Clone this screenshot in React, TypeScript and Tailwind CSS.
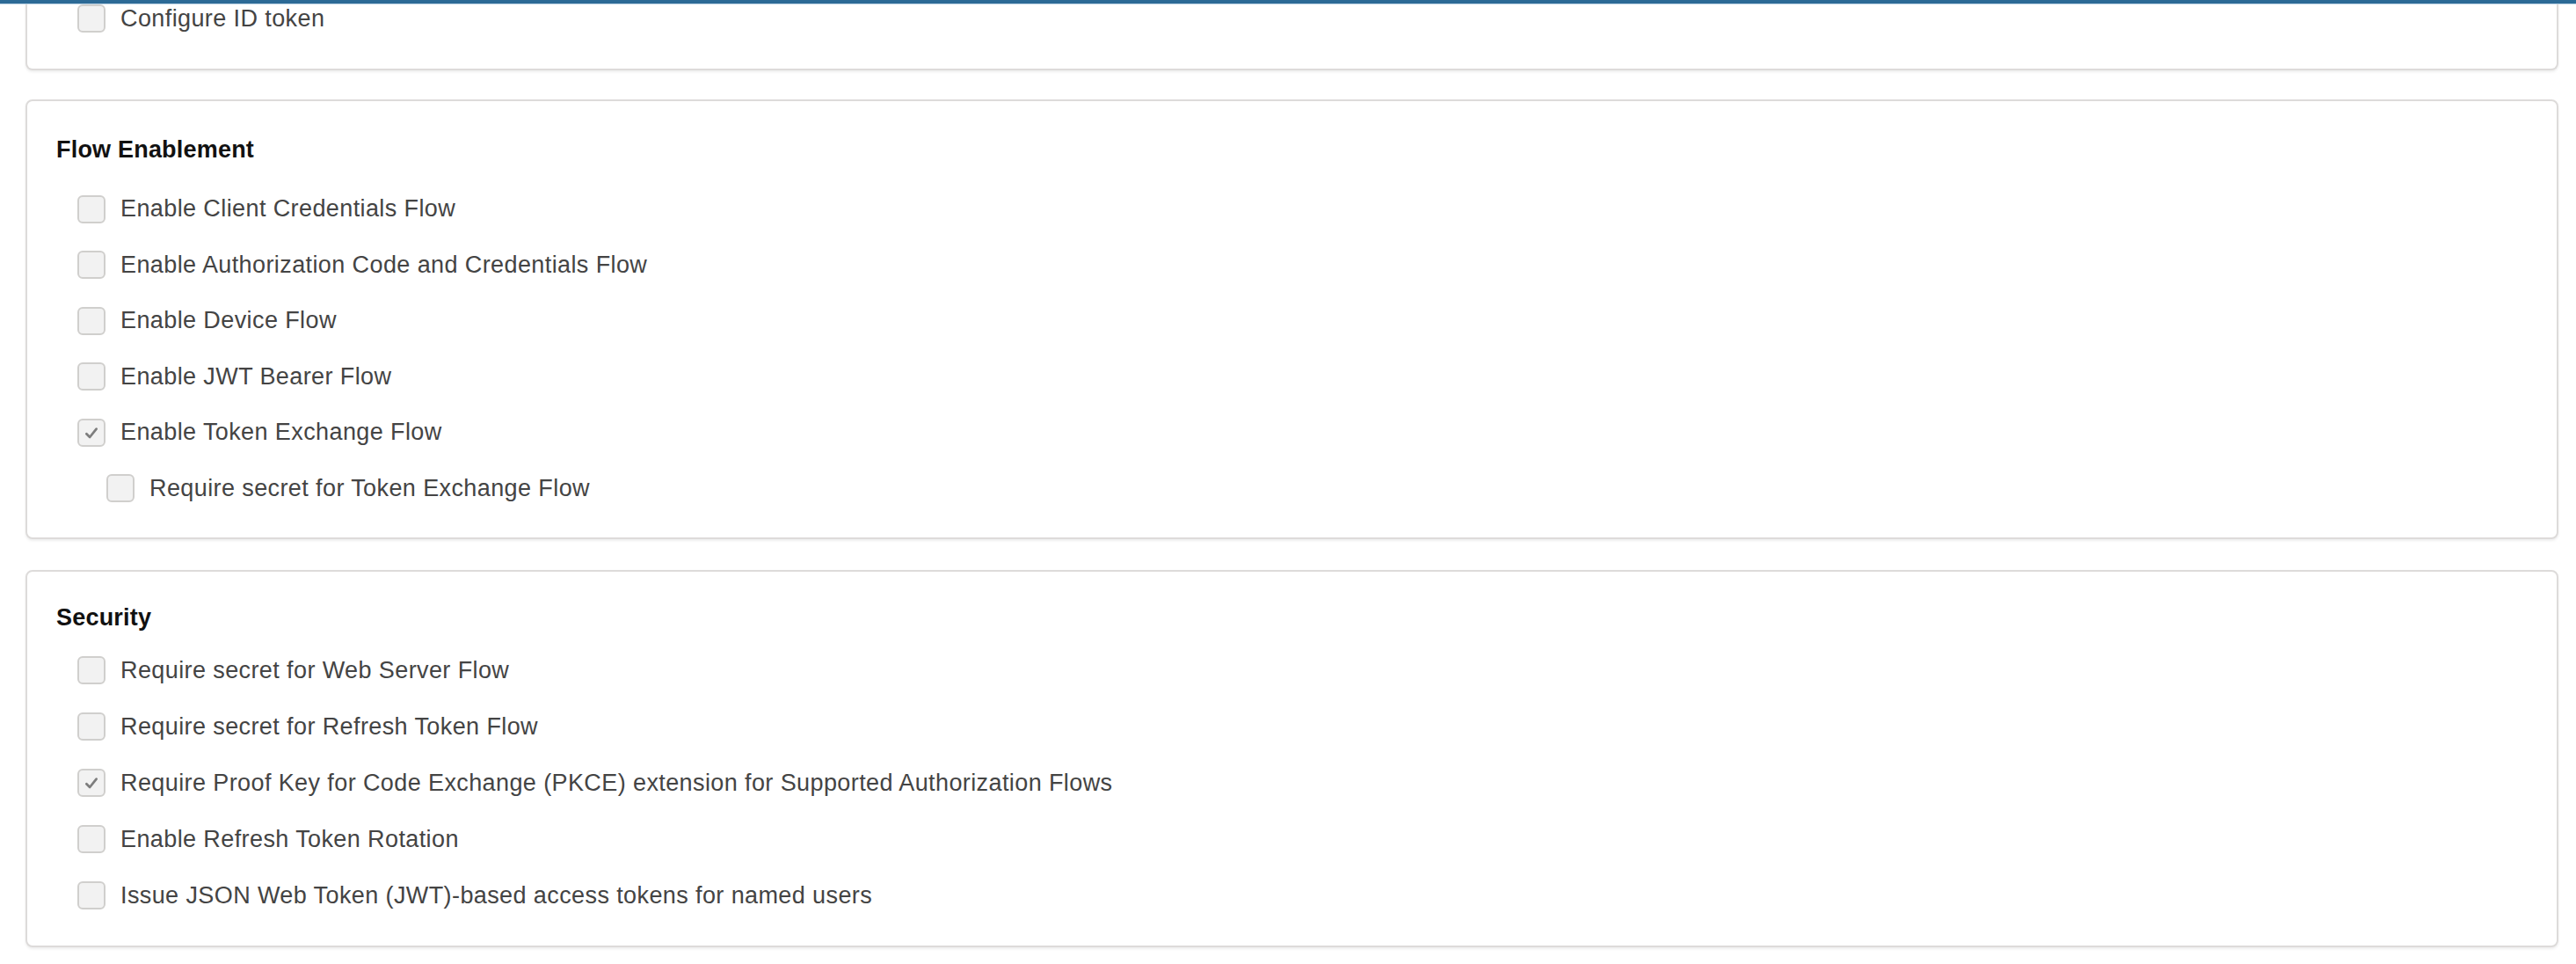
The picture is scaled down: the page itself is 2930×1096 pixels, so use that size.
import React from 'react';

type Item = { label: string; checked?: boolean; nested?: boolean };

const flowItems: Item[] = [
  { label: 'Enable Client Credentials Flow' },
  { label: 'Enable Authorization Code and Credentials Flow' },
  { label: 'Enable Device Flow' },
  { label: 'Enable JWT Bearer Flow' },
  { label: 'Enable Token Exchange Flow', checked: true },
  { label: 'Require secret for Token Exchange Flow', nested: true },
];

const securityItems: Item[] = [
  { label: 'Require secret for Web Server Flow' },
  { label: 'Require secret for Refresh Token Flow' },
  { label: 'Require Proof Key for Code Exchange (PKCE) extension for Supported Authorization Flows', checked: true },
  { label: 'Enable Refresh Token Rotation' },
  { label: 'Issue JSON Web Token (JWT)-based access tokens for named users' },
];

const CheckBox: React.FC<{ checked?: boolean }> = ({ checked }) => (
  <span className="flex items-center justify-center w-[32px] h-[32px] shrink-0 rounded-[6px] border-2 border-[#d0cfcd] bg-[#f2f2f2]">
    {checked && (
      <svg width="20" height="20" viewBox="0 0 16 16" fill="none" stroke="#7d7d7d" strokeWidth="2.2" strokeLinecap="round" strokeLinejoin="round">
        <polyline points="3.5,9 6.5,12 12.5,4.5" />
      </svg>
    )}
  </span>
);

const Row: React.FC<{ item: Item; pitch: string }> = ({ item, pitch }) => (
  <div className={`flex items-center gap-[17px] ${pitch} ${item.nested ? 'pl-[57px]' : 'pl-[24px]'}`}>
    <CheckBox checked={item.checked} />
    <span className="text-[27px] leading-none tracking-[0.4px] text-[#444444]">{item.label}</span>
  </div>
);

const card = 'bg-white border-2 border-[#dddbda] rounded-[8px] shadow-[0_2px_3px_rgba(0,0,0,0.07)]';

export default function App() {
  return (
    <div className="w-[2930px] h-[1096px] overflow-hidden bg-white font-['Liberation_Sans',Arial,sans-serif]">
      {/* Top bar */}
      <div className="relative z-10 h-[4px] bg-[#2c6a96] border-b border-[#b9d1e3] box-content" />

      <div className="pl-[29px] pr-[20px]">
        {/* Partially scrolled card */}
        <div className={`${card} -mt-[16px] border-t-0 rounded-t-none pl-[33px] pb-[25px]`}>
          <Row item={{ label: 'Configure ID token' }} pitch="h-[64px]" />
        </div>

        {/* Flow Enablement */}
        <div className={`${card} mt-[33px] pl-[33px] pt-[37px] pb-[24px]`}>
          <h2 className="text-[27px] leading-[36px] font-bold tracking-[0.2px] text-[#111111]">Flow Enablement</h2>
          <div className="mt-[18px] flex flex-col">
            {flowItems.map((it) => (
              <Row key={it.label} item={it} pitch="h-[63.5px]" />
            ))}
          </div>
        </div>

        {/* Security */}
        <div className={`${card} mt-[35px] pl-[33px] pt-[34px] pb-[25px]`}>
          <h2 className="text-[27px] leading-[36px] font-bold tracking-[0.2px] text-[#111111]">Security</h2>
          <div className="mt-[10px] flex flex-col">
            {securityItems.map((it) => (
              <Row key={it.label} item={it} pitch="h-[64px]" />
            ))}
          </div>
        </div>
      </div>
    </div>
  );
}
